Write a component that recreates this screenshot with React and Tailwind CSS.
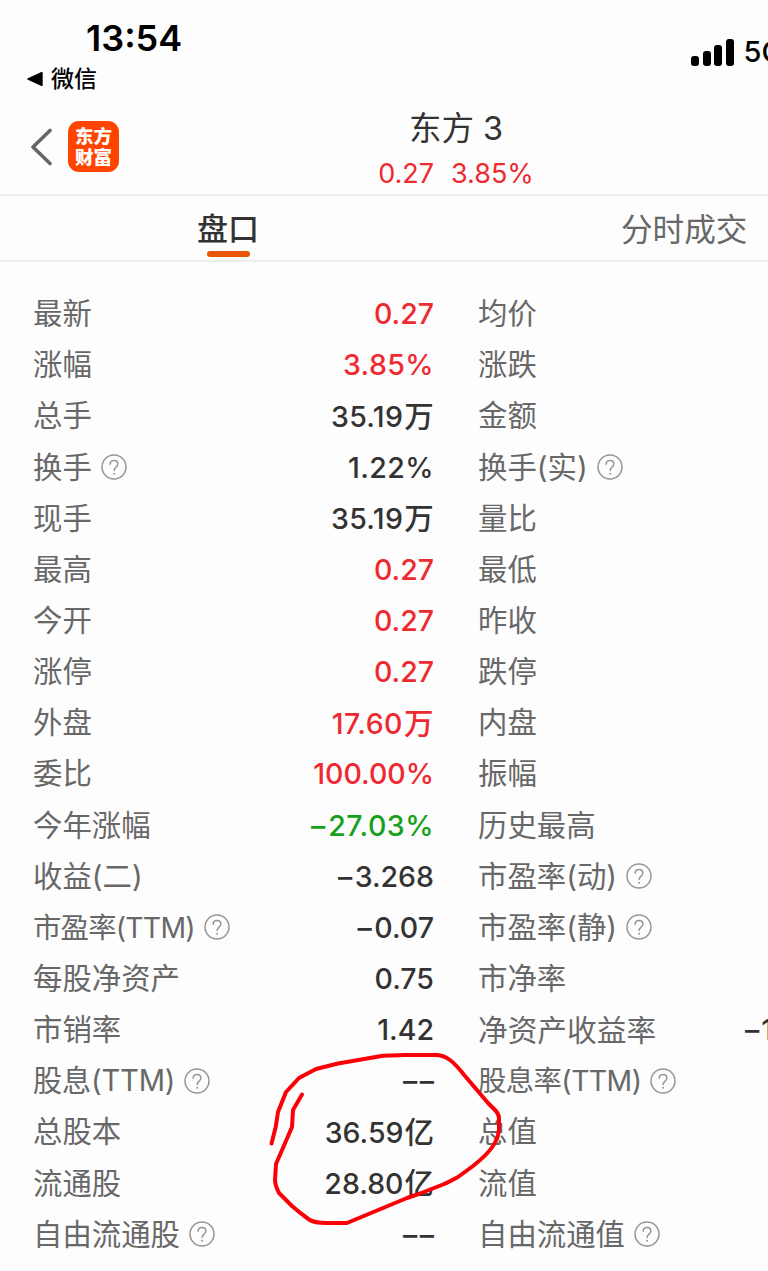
const rows = [
  { label: "最新", value: "0.27", tone: "up", label2: "均价" },
  { label: "涨幅", value: "3.85%", tone: "up", fit: "tracking-[0.4px]", label2: "涨跌" },
  { label: "总手", value: "35.19", unit: "万", fit: "tracking-[0.3px]", label2: "金额" },
  { label: "换手", help: true, value: "1.22%", fit: "tracking-[0.4px]", label2: "换手(实)", help2: true },
  { label: "现手", value: "35.19", unit: "万", fit: "tracking-[0.3px]", label2: "量比" },
  { label: "最高", value: "0.27", tone: "up", label2: "最低" },
  { label: "今开", value: "0.27", tone: "up", label2: "昨收" },
  { label: "涨停", value: "0.27", tone: "up", label2: "跌停" },
  { label: "外盘", value: "17.60", unit: "万", tone: "up", fit: "tracking-[0.5px]", label2: "内盘" },
  { label: "委比", value: "100.00%", tone: "up", label2: "振幅" },
  { label: "今年涨幅", sign: "–", value: "27.03%", tone: "down", fit: "tracking-[0.5px]", label2: "历史最高" },
  { label: "收益(二)", sign: "–", value: "3.268", label2: "市盈率(动)", help2: true },
  { label: "市盈率(TTM)", help: true, sign: "–", value: "0.07", label2: "市盈率(静)", help2: true },
  { label: "每股净资产", value: "0.75", label2: "市净率" },
  { label: "市销率", value: "1.42", label2: "净资产收益率", value2: "–1" },
  { label: "股息(TTM)", help: true, sign: "–", value: "–", label2: "股息率(TTM)", help2: true },
  { label: "总股本", value: "36.59", unit: "亿", label2: "总值" },
  { label: "流通股", value: "28.80", unit: "亿", label2: "流值" },
  { label: "自由流通股", help: true, sign: "–", value: "–", label2: "自由流通值", help2: true },
];

const tones = {
  up: "text-[#ee2930]",
  down: "text-[#17a01b]",
};

const labelSizes = {
  "市盈率(TTM)": "text-[28.4px] tracking-[-0.8px]",
  "股息(TTM)": "text-[29.2px] tracking-[-0.2px]",
  "股息率(TTM)": "text-[28.4px] tracking-[-0.6px]",
  "净资产收益率": "text-[29.7px]",
};

const HelpIcon = () => (
  <svg
    className="ml-[9px] h-[27px] w-[27px] shrink-0"
    viewBox="0 0 27 27"
    fill="none"
    stroke="#969696"
    strokeLinecap="round"
  >
    <circle cx="13" cy="13" r="12" strokeWidth="1.5" />
    <path
      d="M9.200 10.200C9.200 7.800 10.800 6.400 13 6.400s3.900 1.400 3.900 3.600c0 3-3.800 3.200-3.800 6.500"
      strokeWidth="1.5"
    />
    <circle cx="13.100" cy="19.700" r="1" fill="#969696" stroke="none" />
  </svg>
);

const Label = ({ text, help }) => (
  <div className="flex items-center whitespace-nowrap text-[#686868]">
    <span className={labelSizes[text] || "text-[29.4px]"}>{text}</span>
    {help && <HelpIcon />}
  </div>
);

const StatusBar = () => (
  <div className="flex h-[98px] justify-between">
    <div className="text-black">
      <div className="ml-[86px] mt-[15px] h-[46px] text-[36px] font-semibold leading-[46px]">
        13:54
      </div>
      <div className="ml-[27px] flex h-[36px] items-center">
        <svg className="mr-[8px] h-[16px] w-[16px]" viewBox="0 0 16 16">
          <path
            d="M1.2 8 14.8 1.8v12.4z"
            stroke="#000"
            strokeWidth="1.8"
            strokeLinejoin="round"
          />
        </svg>
        <span className="text-[23px] font-medium">微信</span>
      </div>
    </div>
    <div className="mt-[37px] flex h-[30px] w-[77px] shrink-0 items-center">
      <div className="flex h-[27px] shrink-0 items-end gap-[3.5px]">
        <div className="h-[10px] w-[8px] rounded-[3px] bg-black" />
        <div className="h-[15px] w-[8px] rounded-[3px] bg-black" />
        <div className="h-[21px] w-[8px] rounded-[3px] bg-black" />
        <div className="h-[27px] w-[8px] rounded-[3px] bg-black" />
      </div>
      <span className="ml-[10px] text-[29px] font-medium text-black">5G</span>
    </div>
  </div>
);

const Header = () => (
  <div className="flex h-[98px] border-b-2 border-[#ececec]">
    <div className="flex h-[97px] w-[372px] items-center pl-[30px]">
      <svg className="h-[38px] w-[23px]" viewBox="0 0 23 38" fill="none">
        <path
          d="M20 2.5 3 19l17 16.5"
          stroke="#666"
          strokeWidth="3.6"
          strokeLinecap="round"
          strokeLinejoin="round"
        />
      </svg>
      <div className="ml-[15px] flex h-[51px] w-[51px] flex-col items-center justify-center rounded-[11px] bg-[#ff4400] text-[18.5px] font-black leading-[21px] text-white">
        <span>东方</span>
        <span>财富</span>
      </div>
    </div>
    <div className="flex w-[168px] flex-col items-center">
      <div className="mt-[10px] h-[42px] text-[32.5px] leading-[42px] text-[#333]">
        东方 3
      </div>
      <div className="mt-[7px] flex h-[34px] gap-[17px] text-[27px] leading-[34px] text-[#ee2930]">
        <span>0.27</span>
        <span>3.85%</span>
      </div>
    </div>
  </div>
);

const Tabs = () => (
  <div className="flex h-[66px] border-b-2 border-[#eeeeee]">
    <div className="flex w-[456px] flex-col items-center">
      <div className="mt-[10px] h-[46px] text-[31px] font-medium leading-[46px] text-[#333]">
        盘口
      </div>
      <div className="-mt-[1px] h-[6px] w-[43px] shrink-0 rounded-full bg-[#ea5504]" />
    </div>
    <div className="mt-[11px] h-[46px] whitespace-nowrap pl-[165px] text-[31.6px] leading-[46px] text-[#686868]">
      分时成交
    </div>
  </div>
);

// Hand-drawn marker ring around the share counts
const Marker = () => (
  <svg
    className="pointer-events-none absolute left-[260px] top-[1040px] h-[200px] w-[260px]"
    viewBox="0 0 260 200"
    fill="none"
    stroke="#fb0007"
    strokeWidth="4"
    strokeLinecap="round"
    strokeLinejoin="round"
  >
    <path d="M11.5 103.5 15.7 87 18 72 26 52 39 38 56 29 78 23.5 123 15.8 146 15H177Q184 15.5 190 20T205 36L228 63 236 71Q239 75 239 78V88Q239 97 233 106T213 126L198 137Q189 142 183 144.5L160 153.5 147 158 87 183H67Q54 183 49 179.500 40 173 32 166L19 153Q15 145 15 140L16 124 32 87 33 70 42 54.5" />
  </svg>
);

const App = () => {
  return (
    <div
      className="relative h-[1271px] w-[768px] overflow-hidden bg-[#fdfdfd] font-['Inter','Noto_Sans_CJK_SC',sans-serif]"
      lang="zh-CN"
    >
      <StatusBar />
      <Header />
      <Tabs />
      <div className="pt-[26.6px]">
        {rows.map((row) => (
          <div
            key={row.label}
            className="grid h-[51.15px] grid-cols-[200px_201px_44px_267px_60px] items-center pl-[33px] leading-[50px]"
          >
            <Label text={row.label} help={row.help} />
            <div
              className={`whitespace-nowrap text-right text-[28.5px] font-medium ${tones[row.tone] || "text-[#333]"} ${row.fit || ""}`}
            >
              {row.sign && <span className="mr-[2.5px]">{row.sign}</span>}
              {row.value}
              {row.unit && (
                <span className="ml-[1px] text-[29.5px]">{row.unit}</span>
              )}
            </div>
            <div />
            <Label text={row.label2} help={row.help2} />
            <div className="text-[28.5px] font-medium tracking-[2px] text-[#333]">
              {row.value2}
            </div>
          </div>
        ))}
      </div>
      <Marker />
    </div>
  );
};

export default App;
